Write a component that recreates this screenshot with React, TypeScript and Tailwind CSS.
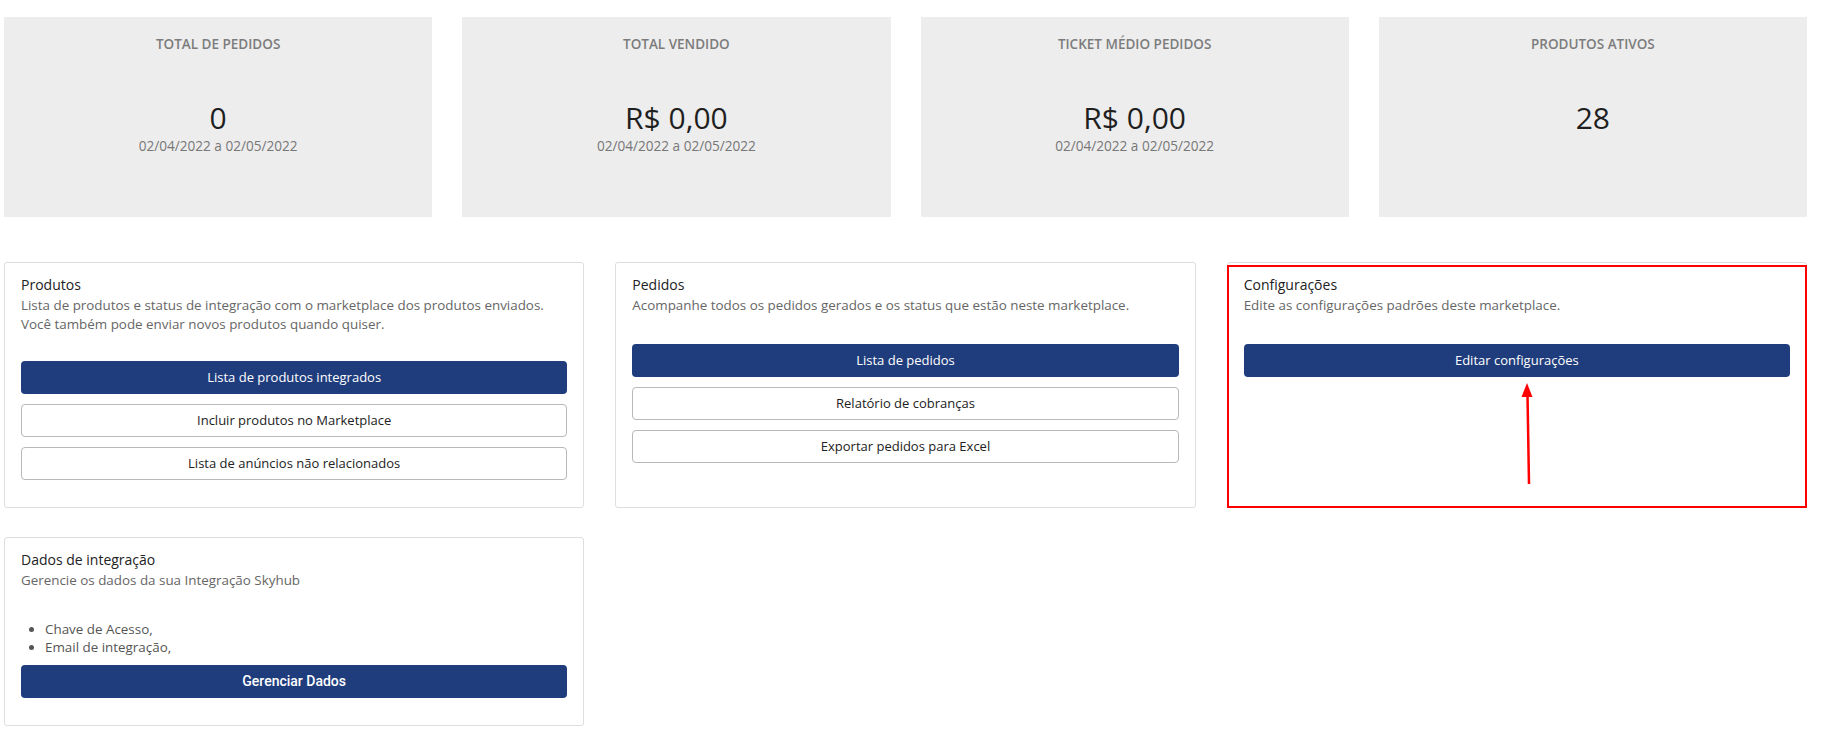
import type { ReactNode } from "react";

interface StatProps {
  title: string;
  value: string;
  range?: string;
}

const Stat = ({ title, value, range }: StatProps) => {
  return (
    <div className="h-[200px] bg-[#ededed] flex flex-col items-center pt-[17px]">
      <p className="text-[13.5px] leading-5 font-semibold text-[#7c7c7c] uppercase">{title}</p>
      <p className="mt-[46px] text-[30px] leading-[36px] text-[#1f1f1f]">{value}</p>
      {range && <p className="text-[13.6px] leading-[19px] text-[#777]">{range}</p>}
    </div>
  );
};

const BtnPrimary = ({ children, roboto }: { children: ReactNode; roboto?: boolean }) => (
  <button
    className={
      roboto
        ? "w-full h-[33px] rounded-[4px] bg-[#1f3d7d] text-white text-[14px] font-medium font-['Roboto',sans-serif]"
        : "w-full h-[33px] rounded-[4px] bg-[#1f3d7d] text-white text-[13px]"
    }
  >
    {children}
  </button>
);

const BtnOutline = ({ children }: { children: ReactNode }) => (
  <button className="w-full h-[33px] rounded-[4px] border border-[#b8b8b8] bg-white text-[#222] text-[13px]">
    {children}
  </button>
);

interface PanelProps {
  title: string;
  desc: ReactNode;
  children: ReactNode;
  highlight?: boolean;
}

const Panel = ({ title, desc, children, highlight }: PanelProps) => {
  return (
    <div className="relative border border-[#dedede] rounded-[3px] bg-white px-4 pt-[12px] pb-[27px]">
      <p className="text-[14px] leading-5 text-[#222]">{title}</p>
      <div className="mt-[1px] text-[13.4px] leading-[19px] text-[#666]">{desc}</div>
      {children}
      {highlight && (
        <div className="absolute left-[-1px] right-[-1px] top-[2px] bottom-[-1px] border-2 border-[#ff0000] pointer-events-none" />
      )}
    </div>
  );
};

export default function App() {
  return (
    <div className="min-h-screen bg-white pt-[17px] pl-[4px] pr-[14px] font-['Open_Sans',sans-serif]">
      <div className="grid grid-cols-4 gap-[30px]">
        <Stat title="Total de pedidos" value="0" range="02/04/2022 a 02/05/2022" />
        <Stat title="Total vendido" value="R$ 0,00" range="02/04/2022 a 02/05/2022" />
        <Stat title="Ticket médio pedidos" value="R$ 0,00" range="02/04/2022 a 02/05/2022" />
        <Stat title="Produtos ativos" value="28" />
      </div>

      <div className="grid grid-cols-3 gap-[31px] mt-[45px]">
        <Panel
          title="Produtos"
          desc={
            <>
              <p>Lista de produtos e status de integração com o marketplace dos produtos enviados.</p>
              <p>Você também pode enviar novos produtos quando quiser.</p>
            </>
          }
        >
          <div className="mt-[27px] flex flex-col gap-[10px]">
            <BtnPrimary>Lista de produtos integrados</BtnPrimary>
            <BtnOutline>Incluir produtos no Marketplace</BtnOutline>
            <BtnOutline>Lista de anúncios não relacionados</BtnOutline>
          </div>
        </Panel>

        <Panel
          title="Pedidos"
          desc={<p>Acompanhe todos os pedidos gerados e os status que estão neste marketplace.</p>}
        >
          <div className="mt-[29px] flex flex-col gap-[10px]">
            <BtnPrimary>Lista de pedidos</BtnPrimary>
            <BtnOutline>Relatório de cobranças</BtnOutline>
            <BtnOutline>Exportar pedidos para Excel</BtnOutline>
          </div>
        </Panel>

        <Panel
          title="Configurações"
          desc={<p>Edite as configurações padrões deste marketplace.</p>}
          highlight
        >
          <div className="mt-[29px] relative">
            <BtnPrimary>Editar configurações</BtnPrimary>
            <svg
              className="absolute left-[276px] top-[39px]"
              width="16"
              height="104"
              viewBox="0 0 16 104"
            >
              <line x1="7.5" y1="12" x2="9" y2="101" stroke="#ff0000" strokeWidth="2.5" />
              <polygon points="7,0 1.5,14 12.5,14" fill="#ff0000" />
            </svg>
          </div>
        </Panel>
      </div>

      <div className="grid grid-cols-3 gap-[31px] mt-[29px]">
        <Panel title="Dados de integração" desc={<p>Gerencie os dados da sua Integração Skyhub</p>}>
          <ul className="mt-[31px] pl-[24px] list-disc text-[13.4px] leading-[17.5px] text-[#555] marker:text-[#555]">
            <li>Chave de Acesso,</li>
            <li>Email de integração,</li>
          </ul>
          <div className="mt-[9px]">
            <BtnPrimary roboto>Gerenciar Dados</BtnPrimary>
          </div>
        </Panel>
      </div>
    </div>
  );
}
